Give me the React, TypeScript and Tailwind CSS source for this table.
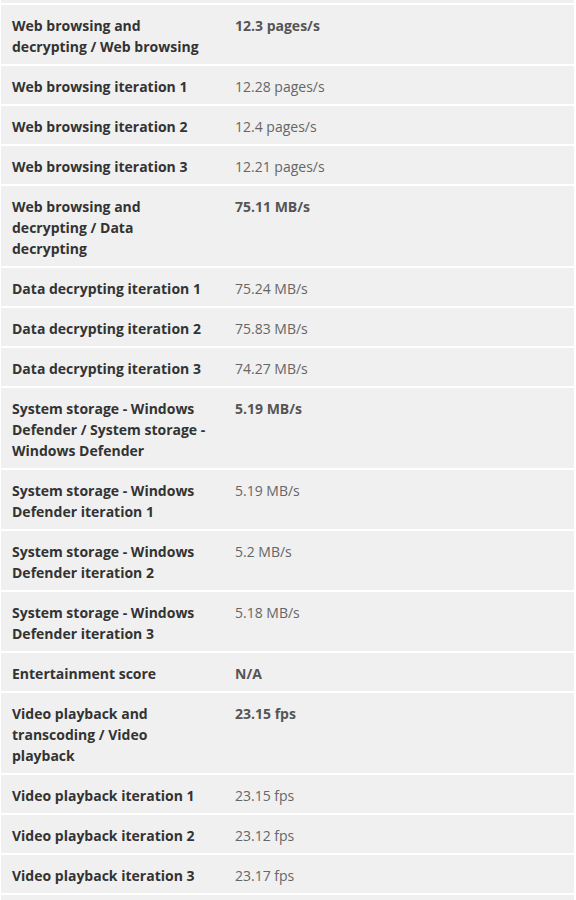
const rows = [
  { label: 'Web browsing and decrypting / Web browsing', value: '12.3 pages/s', bold: true },
  { label: 'Web browsing iteration 1', value: '12.28 pages/s' },
  { label: 'Web browsing iteration 2', value: '12.4 pages/s' },
  { label: 'Web browsing iteration 3', value: '12.21 pages/s' },
  { label: 'Web browsing and decrypting / Data decrypting', value: '75.11 MB/s', bold: true },
  { label: 'Data decrypting iteration 1', value: '75.24 MB/s' },
  { label: 'Data decrypting iteration 2', value: '75.83 MB/s' },
  { label: 'Data decrypting iteration 3', value: '74.27 MB/s' },
  { label: 'System storage - Windows Defender / System storage - Windows Defender', value: '5.19 MB/s', bold: true },
  { label: 'System storage - Windows Defender iteration 1', value: '5.19 MB/s' },
  { label: 'System storage - Windows Defender iteration 2', value: '5.2 MB/s' },
  { label: 'System storage - Windows Defender iteration 3', value: '5.18 MB/s' },
  { label: 'Entertainment score', value: 'N/A', bold: true },
  { label: 'Video playback and transcoding / Video playback', value: '23.15 fps', bold: true },
  { label: 'Video playback iteration 1', value: '23.15 fps' },
  { label: 'Video playback iteration 2', value: '23.12 fps' },
  { label: 'Video playback iteration 3', value: '23.17 fps' },
]

export default function App() {
  return (
    <div className="min-h-[900px] bg-white font-['Open_Sans',sans-serif] text-[14px] leading-[21px]">
      <div className="ml-[1px] w-[573px]">
        <div className="h-[5px] border-b-2 border-white bg-[#f0f0f0]" />
        {rows.map((row, i) => (
          <div key={i} className="grid grid-cols-[223px_1fr] border-b-2 border-white bg-[#f0f0f0]">
            <div className="pl-[11px] pr-[15px] pt-[10px] pb-[7px] font-bold text-[#333333]">{row.label}</div>
            <div className={row.bold ? 'px-[11px] pt-[10px] pb-[7px] font-bold text-[#555555]' : 'px-[11px] pt-[10px] pb-[7px] text-[#666666]'}>
              {row.value}
            </div>
          </div>
        ))}
        <div className="h-[10px] bg-[#f0f0f0]" />
      </div>
    </div>
  )
}
